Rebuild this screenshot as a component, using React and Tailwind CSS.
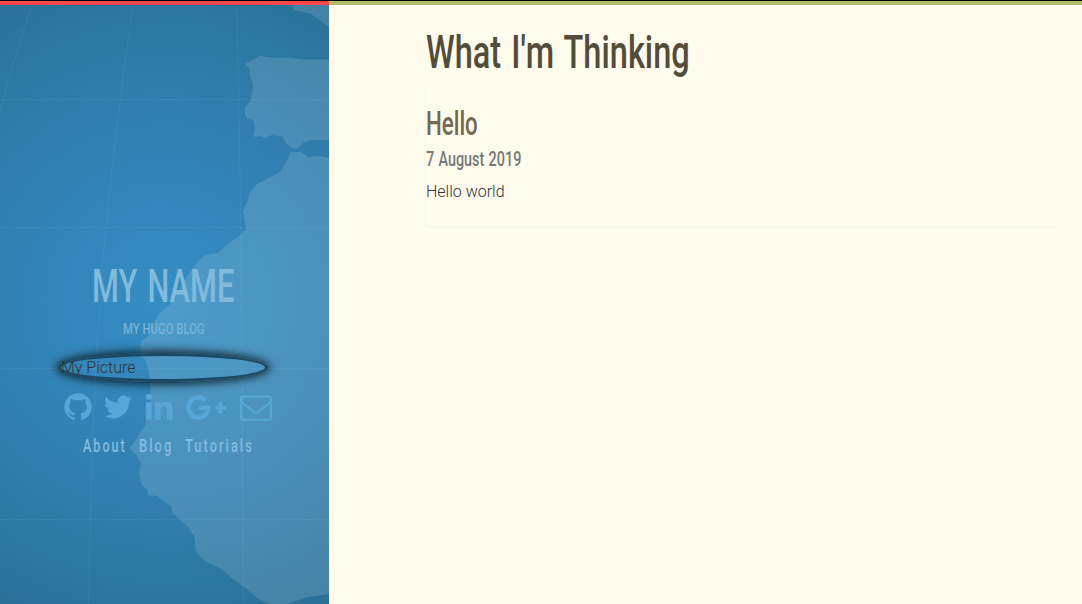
import { useLayoutEffect, useRef, useState } from "react";
import { FaGooglePlusG } from "react-icons/fa";

// Condensed display text: the line is squeezed to the width of its box.
function Condensed({ as: Tag = "span", className, children }) {
  const box = useRef(null);
  const line = useRef(null);
  const [scale, setScale] = useState(1);
  useLayoutEffect(() => {
    setScale(box.current.clientWidth / line.current.offsetWidth);
  }, [children]);
  return (
    <Tag ref={box} className={`block whitespace-nowrap font-['Roboto',sans-serif] ${className}`}>
      <span ref={line} className="inline-block origin-left" style={{ transform: `scaleX(${scale})` }}>
        {children}
      </span>
    </Tag>
  );
}

function Icon({ d, className }) {
  return (
    <svg viewBox="0 0 1792 1792" className={`size-8 shrink-0 fill-current ${className || ""}`}>
      <path d={d} />
    </svg>
  );
}

const GITHUB =
  "M896 128q209 0 385.5 103t279.5 279.5 103 385.5q0 251-146.5 451.5t-378.5 277.5q-27 5-40-7t-13-30q0-3 .5-76.5t.5-134.5q0-97-52-142 57-6 102.5-18t94-39 81-66.5 53-105 20.5-150.5q0-119-79-206 37-91-8-204-28-9-81 11t-92 44l-38 24q-93-26-192-26t-192 26q-16-11-42.5-27t-83.5-38.5-85-13.5q-45 113-8 204-79 87-79 206 0 85 20.5 150t52.5 105 80.5 67 94 39 102.5 18q-39 36-49 103-21 10-45 15t-57 5-65.5-21.5-55.5-62.5q-19-32-48.5-52t-49.5-24l-20-3q-21 0-29 4.5t-5 11.5 9 14 13 12l7 5q22 10 43.5 38t31.5 51l10 23q13 38 44 61.5t67 30 69.5 7 55.5-3.5l23-4q0 38 .5 88.5t.5 54.5q0 18-13 30t-40 7q-232-77-378.5-277.5t-146.5-451.5q0-209 103-385.5t279.5-279.5 385.5-103z";
const TWITTER =
  "M1684 408q-67 98-162 167 1 14 1 42 0 130-38 259.5t-115.5 248.5-184.5 210.5-258 146-323 54.5q-271 0-496-145 35 4 78 4 225 0 401-138-105-2-188-64.5t-114-159.5q33 5 61 5 43 0 85-11-112-23-185.5-111.5t-73.5-205.5v-4q68 38 146 41-66-44-105-115t-39-154q0-88 44-163 121 149 294.5 238.5t371.5 99.5q-8-38-8-74 0-134 94.5-228.5t228.5-94.5q140 0 236 102 109-21 205-78-37 115-142 178 93-10 186-50z";
const LINKEDIN =
  "M477 625v991h-330v-991h330zm21-306q1 73-50.5 122t-135.5 49h-2q-82 0-132-49t-50-122q0-74 51.5-122.5t134.5-48.5 133 48.5 51 122.5zm1166 729v568h-329v-530q0-105-40.5-164.5t-126.5-59.5q-63 0-105.5 34.5t-63.5 85.5q-11 30-11 81v553h-329q2-399 2-647t-1-296l-1-48h329v144h-2q20-32 41-56t56.5-52 87-43.5 114.5-15.5q171 0 275 113.5t104 332.5z";
const ENVELOPE =
  "M1664 1504v-768q-32 36-69 66-268 206-426 338-51 43-83 67t-86.5 48.5-102.5 24.5h-2q-48 0-102.5-24.5t-86.5-48.5-83-67q-158-132-426-338-37-30-69-66v768q0 13 9.5 22.5t22.5 9.5h1472q13 0 22.5-9.5t9.5-22.5zm0-1051v-24.5l-.5-13-3-12.5-5.5-9-9-7.5-14-2.5h-1472q-13 0-22.5 9.5t-9.5 22.5q0 168 147 284 193 152 401 317 6 5 35 29.5t46 37.5 44.5 31.5 50.5 27.5 43 9h2q20 0 43-9t50.5-27.5 44.5-31.5 46-37.5 35-29.5q208-165 401-317 54-43 100.5-115.5t46.5-131.5zm128-37v1088q0 66-47 113t-113 47h-1472q-66 0-113-47t-47-113v-1088q0-66 47-113t113-47h1472q66 0 113 47t47 113z";

function WorldMap() {
  return (
    <svg viewBox="0 0 329 604" className="absolute inset-0 h-full w-full">
      <g fill="#fff" fillOpacity=".125">
        <path d="M292 0L294 10L311 14L320 20L329 27V0Z" />
        <path d="M245 64L260 56L277 58L289 57.500L301 59.500H329V140H310L303 143L297 149L291 147.500L286 143L283 136.500L271 135L266 138L260 136L253.500 137L255 128L253.500 120L248 119L245 115V107L250 102L253 90V84L250 77V69Z" />
        <path d="M291 152H301L308 157L320 156L329 158V594L308 597L293 602L287 604H270L258 599L244 587L232 578L221 569L205 561L196 551L194 536L187 526L178 518L173 514L171 506L165 502L157 496L149 495L147 490L142 485L139 474L141 463L136 455L129 448L133 444L138 436L145 426L148 414L151 397L149 373L146 361L140 355L141 341L150 335L152 325L159 314L170 304L180 288L188 275L198 261L205 255L218 253L229 243L239 236L246 229L243 211L248 200L250 192L257 184L269 178L280 172L286 162Z" />
      </g>
      <g fill="none" stroke="#fff" strokeOpacity=".05" strokeWidth="1.200">
        <path d="M0 99.500H329M0 227.500H329M0 368.500H329M0 519.500H329" />
        <path d="M32 5Q12 65 0 111M133 5Q119 100 106 227T88.500 604M236.500 5Q240 130 241 260T243.500 604" />
      </g>
    </svg>
  );
}

export default function App() {
  return (
    <div className="h-[604px] w-full overflow-hidden bg-[#fffced] font-['Roboto',sans-serif] font-light text-base text-[#333]">
      <div className="flex h-full">
        <aside className="relative h-full w-[329px] shrink-0 bg-[radial-gradient(circle_at_164px_302px,#358dc3_0%,#3180b0_55%,#2b7097_100%)]">
          <WorldMap />
          <div className="relative flex flex-col">
            <div className="h-[5px] border-t border-black bg-[#f9464f]" />
            <Condensed as="h1" className="mt-[254px] ml-[92px] h-[54px] w-[142px] text-[47px] leading-[54px] font-medium [word-spacing:4px] text-[#80badc]">
              MY NAME
            </Condensed>
            <Condensed as="p" className="mt-[6px] ml-[122.500px] h-5 w-[82px] text-[15.500px] leading-5 font-medium text-[#75b3d9]">
              MY HUGO BLOG
            </Condensed>
            <div className="mt-[14px] ml-[58px] h-[29px] w-[210px] rounded-[50%] border-[3px] border-[#1b4965] whitespace-nowrap leading-6 shadow-[0_0_10px_2px_rgba(0,0,0,0.8)]">
              My Picture
            </div>
            <div className="mt-[9px] ml-[61.500px] flex h-8 items-center text-[#58a6d5]">
              <Icon d={GITHUB} />
              <Icon d={TWITTER} className="ml-[8px]" />
              <Icon d={LINKEDIN} className="ml-[9px]" />
              <FaGooglePlusG className="ml-[10px] h-[33px] w-[42px] shrink-0" />
              <Icon d={ENVELOPE} className="ml-[13.500px]" />
            </div>
            <nav className="mt-[11px] ml-[82.500px] flex h-6 text-[18.500px] leading-6 font-medium tracking-[3px] text-[#84bde0]">
              <Condensed as="a" className="w-[44px]">About</Condensed>
              <Condensed as="a" className="ml-[12px] w-[34px]">Blog</Condensed>
              <Condensed as="a" className="ml-[12px] w-[69px]">Tutorials</Condensed>
            </nav>
          </div>
        </aside>
        <main className="min-w-0 flex-1">
          <div className="h-[5px] border-t border-black bg-[#afbd66]" />
          <div className="pl-24">
            <Condensed as="h1" className="mt-[20px] ml-[1px] h-[54px] w-[264px] text-[46.500px] leading-[54px] font-medium [word-spacing:3px] text-[#544c3a]">
              What I'm Thinking
            </Condensed>
            <article className="mt-[5px] h-[142px] w-[632px] rounded-[4px] pl-px shadow-[0_1px_2px_rgba(0,0,0,0.05)]">
              <Condensed as="h2" className="h-9 w-[52px] translate-y-[22px] text-[33px] leading-9 font-medium text-[#736852]">
                Hello
              </Condensed>
              <Condensed as="h3" className="mt-[27px] h-6 w-[95px] text-[20px] leading-6 font-medium [word-spacing:1px] text-[#777]">
                7 August 2019
              </Condensed>
              <p className="mt-[9px] leading-6">Hello world</p>
            </article>
          </div>
        </main>
      </div>
    </div>
  );
}
